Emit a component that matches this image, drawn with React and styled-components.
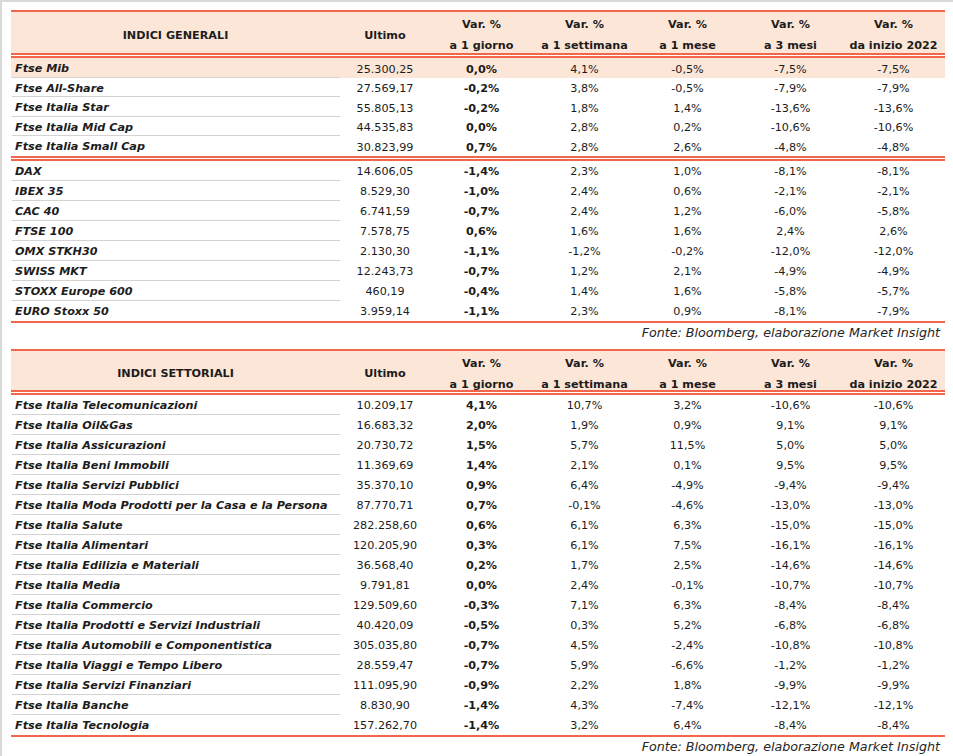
import React from 'react';
import styled, { createGlobalStyle } from 'styled-components';

const RED = '#F2664C';
const PEACH = '#FCE6D7';

const GlobalStyle = createGlobalStyle`
	html, body {
		margin: 0;
		padding: 0;
		background: #fff;
	}
	body {
		font-family: 'DejaVu Sans', 'Liberation Sans', sans-serif;
		color: #1c1c1c;
	}
`;

const Page = styled.div`
	width: 953px;
	height: 756px;
	box-sizing: border-box;
	border-top: 2px solid #d9d9d9;
	border-left: 2px solid #d9d9d9;
	padding: 8px 0 0 9px;
	overflow: hidden;
`;

const Table = styled.div`
	width: 934px;
`;

const Rule = styled.div`
	height: 2px;
	background: ${RED};
`;

const DoubleRule = styled.div`
	height: 1px;
	border-top: 2px solid ${RED};
	border-bottom: 2px solid ${RED};
	background: #fff;
`;

const cols = '329px 90px repeat(5, 103px)';

const HeaderRow = styled.div`
	display: grid;
	grid-template-columns: ${cols};
	height: ${p => p.$h}px;
	box-sizing: border-box;
	padding-top: 2px;
	background: ${PEACH};
	font-size: 11.2px;
	font-weight: bold;
`;

const HeadCell = styled.div`
	display: flex;
	flex-direction: column;
	align-items: center;
	justify-content: center;
	line-height: 21px;
	text-align: center;
	white-space: nowrap;
`;

const Row = styled.div`
	display: grid;
	grid-template-columns: ${cols};
	height: ${p => p.$h}px;
	box-sizing: border-box;
	padding-top: 3px;
	background: ${p => (p.$hl ? PEACH : 'transparent')};
	font-size: 11.2px;
	line-height: 1;
`;

const NameCell = styled.div`
	display: flex;
	align-items: center;
	box-sizing: border-box;
	padding-left: 3px;
	margin-left: 1px;
	font-weight: bold;
	font-style: italic;
	white-space: nowrap;
	border-bottom: 1px solid ${p => (p.$line ? '#d3d3d3' : 'transparent')};
`;

const Cell = styled.div`
	display: flex;
	align-items: center;
	justify-content: center;
	font-weight: ${p => (p.$bold ? 'bold' : 'normal')};
	white-space: nowrap;
`;

const Source = styled.div`
	height: ${p => p.$h}px;
	box-sizing: border-box;
	padding: 2px 5px 0 0;
	text-align: right;
	font-size: 12.7px;
	font-style: italic;
	color: #262626;
	line-height: 16px;
`;

const headers = [
	['Ultimo'],
	['Var. %', 'a 1 giorno'],
	['Var. %', 'a 1 settimana'],
	['Var. %', 'a 1 mese'],
	['Var. %', 'a 3 mesi'],
	['Var. %', 'da inizio 2022']
];

const generali = [
	[
		['Ftse Mib', '25.300,25', '0,0%', '4,1%', '-0,5%', '-7,5%', '-7,5%', true],
		['Ftse All-Share', '27.569,17', '-0,2%', '3,8%', '-0,5%', '-7,9%', '-7,9%'],
		['Ftse Italia Star', '55.805,13', '-0,2%', '1,8%', '1,4%', '-13,6%', '-13,6%'],
		['Ftse Italia Mid Cap', '44.535,83', '0,0%', '2,8%', '0,2%', '-10,6%', '-10,6%'],
		['Ftse Italia Small Cap', '30.823,99', '0,7%', '2,8%', '2,6%', '-4,8%', '-4,8%']
	],
	[
		['DAX', '14.606,05', '-1,4%', '2,3%', '1,0%', '-8,1%', '-8,1%'],
		['IBEX 35', '8.529,30', '-1,0%', '2,4%', '0,6%', '-2,1%', '-2,1%'],
		['CAC 40', '6.741,59', '-0,7%', '2,4%', '1,2%', '-6,0%', '-5,8%'],
		['FTSE 100', '7.578,75', '0,6%', '1,6%', '1,6%', '2,4%', '2,6%'],
		['OMX STKH30', '2.130,30', '-1,1%', '-1,2%', '-0,2%', '-12,0%', '-12,0%'],
		['SWISS MKT', '12.243,73', '-0,7%', '1,2%', '2,1%', '-4,9%', '-4,9%'],
		['STOXX Europe 600', '460,19', '-0,4%', '1,4%', '1,6%', '-5,8%', '-5,7%'],
		['EURO Stoxx 50', '3.959,14', '-1,1%', '2,3%', '0,9%', '-8,1%', '-7,9%']
	]
];

const settoriali = [
	[
		['Ftse Italia Telecomunicazioni', '10.209,17', '4,1%', '10,7%', '3,2%', '-10,6%', '-10,6%'],
		['Ftse Italia Oil&Gas', '16.683,32', '2,0%', '1,9%', '0,9%', '9,1%', '9,1%'],
		['Ftse Italia Assicurazioni', '20.730,72', '1,5%', '5,7%', '11,5%', '5,0%', '5,0%'],
		['Ftse Italia Beni Immobili', '11.369,69', '1,4%', '2,1%', '0,1%', '9,5%', '9,5%'],
		['Ftse Italia Servizi Pubblici', '35.370,10', '0,9%', '6,4%', '-4,9%', '-9,4%', '-9,4%'],
		['Ftse Italia Moda Prodotti per la Casa e la Persona', '87.770,71', '0,7%', '-0,1%', '-4,6%', '-13,0%', '-13,0%'],
		['Ftse Italia Salute', '282.258,60', '0,6%', '6,1%', '6,3%', '-15,0%', '-15,0%'],
		['Ftse Italia Alimentari', '120.205,90', '0,3%', '6,1%', '7,5%', '-16,1%', '-16,1%'],
		['Ftse Italia Edilizia e Materiali', '36.568,40', '0,2%', '1,7%', '2,5%', '-14,6%', '-14,6%'],
		['Ftse Italia Media', '9.791,81', '0,0%', '2,4%', '-0,1%', '-10,7%', '-10,7%'],
		['Ftse Italia Commercio', '129.509,60', '-0,3%', '7,1%', '6,3%', '-8,4%', '-8,4%'],
		['Ftse Italia Prodotti e Servizi Industriali', '40.420,09', '-0,5%', '0,3%', '5,2%', '-6,8%', '-6,8%'],
		['Ftse Italia Automobili e Componentistica', '305.035,80', '-0,7%', '4,5%', '-2,4%', '-10,8%', '-10,8%'],
		['Ftse Italia Viaggi e Tempo Libero', '28.559,47', '-0,7%', '5,9%', '-6,6%', '-1,2%', '-1,2%'],
		['Ftse Italia Servizi Finanziari', '111.095,90', '-0,9%', '2,2%', '1,8%', '-9,9%', '-9,9%'],
		['Ftse Italia Banche', '8.830,90', '-1,4%', '4,3%', '-7,4%', '-12,1%', '-12,1%'],
		['Ftse Italia Tecnologia', '157.262,70', '-1,4%', '3,2%', '6,4%', '-8,4%', '-8,4%']
	]
];

const IndexTable = ({ title, headH, groups, rowHeights, sourceH }) => (
	<Table>
		<Rule />
		<HeaderRow $h={headH}>
			<HeadCell>{title}</HeadCell>
			{headers.map((lines, i) => (
				<HeadCell key={i}>
					{lines.map(l => (
						<span key={l}>{l}</span>
					))}
				</HeadCell>
			))}
		</HeaderRow>
		<DoubleRule />
		{groups.map((rows, g) => (
			<React.Fragment key={g}>
				{g > 0 && <DoubleRule />}
				{rows.map((r, i) => (
					<Row key={r[0]} $h={rowHeights[g]} $hl={r[7]}>
						<NameCell $line={i < rows.length - 1}>{r[0]}</NameCell>
						<Cell>{r[1]}</Cell>
						<Cell $bold>{r[2]}</Cell>
						<Cell>{r[3]}</Cell>
						<Cell>{r[4]}</Cell>
						<Cell>{r[5]}</Cell>
						<Cell>{r[6]}</Cell>
					</Row>
				))}
			</React.Fragment>
		))}
		<Rule />
		<Source $h={sourceH}>Fonte: Bloomberg, elaborazione Market Insight</Source>
	</Table>
);

export default function App() {
	return (
		<>
			<GlobalStyle />
			<Page>
				<IndexTable
					title="INDICI GENERALI"
					headH={41}
					groups={generali}
					rowHeights={[19.5, 20]}
					sourceH={26}
				/>
				<IndexTable
					title="INDICI SETTORIALI"
					headH={39}
					groups={settoriali}
					rowHeights={[20]}
					sourceH={20}
				/>
			</Page>
		</>
	);
}
